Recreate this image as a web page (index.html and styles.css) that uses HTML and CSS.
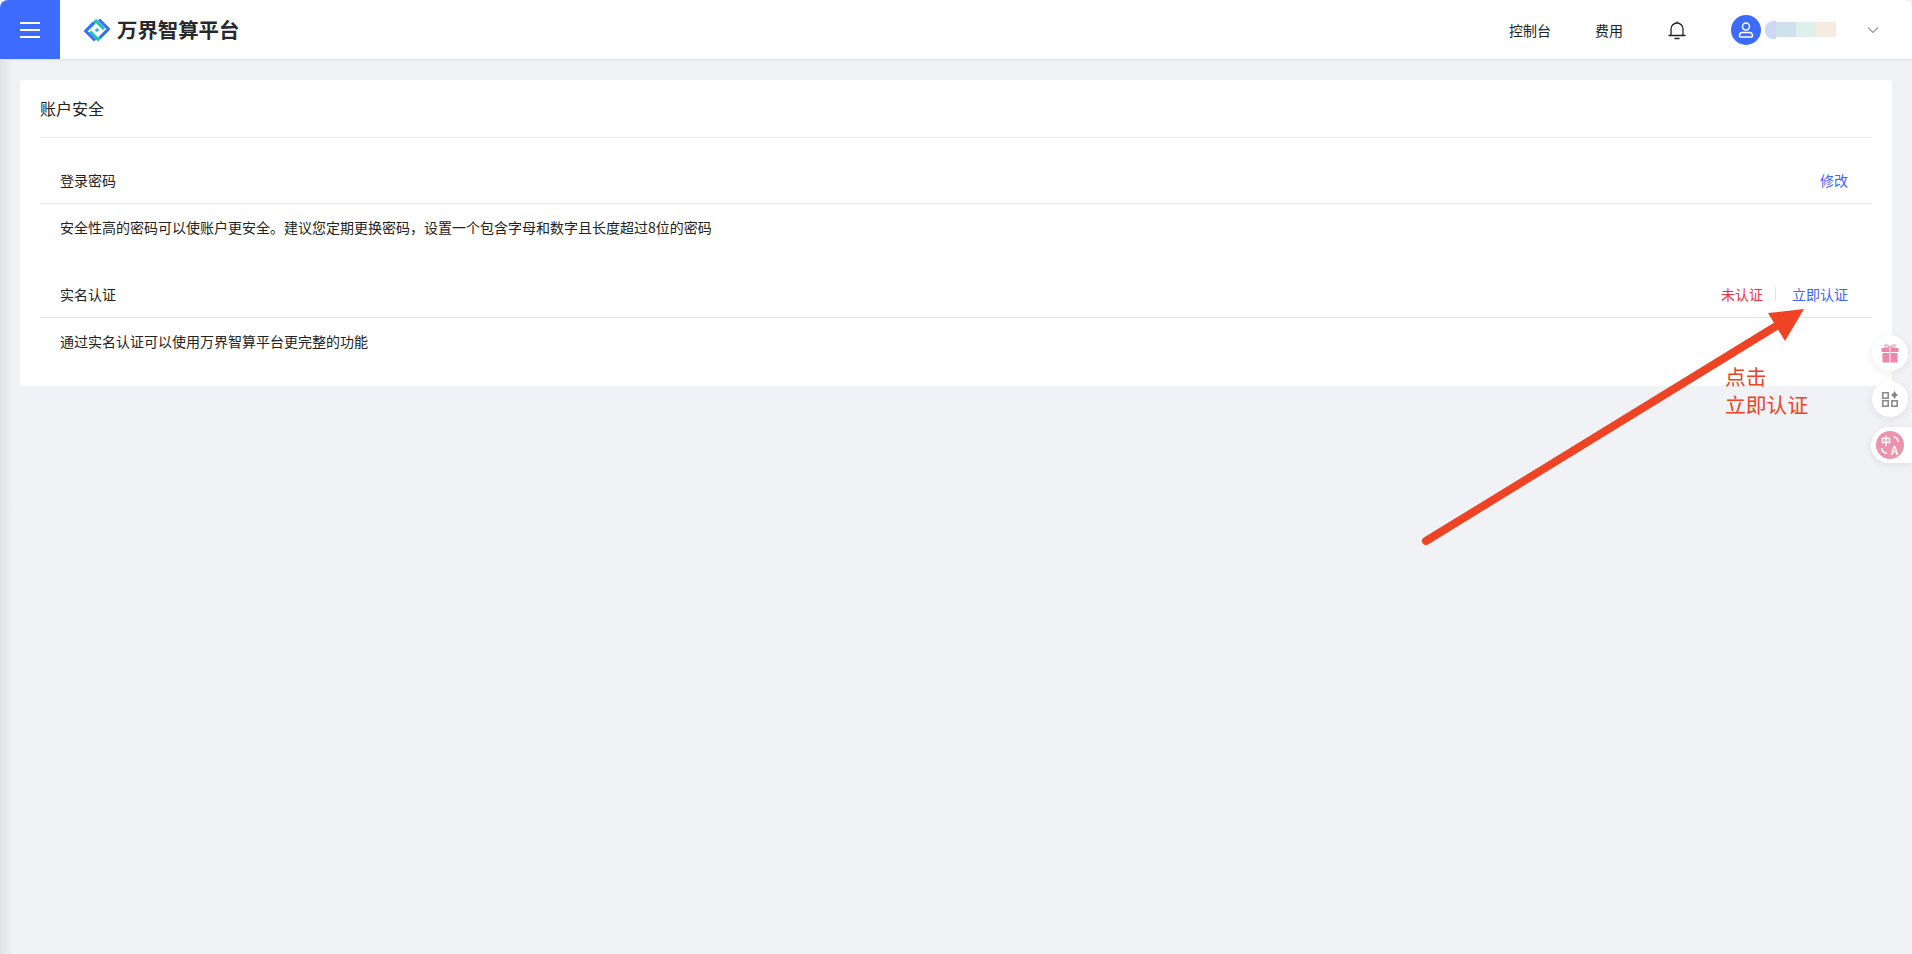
FILE: index.html
```html
<!DOCTYPE html>
<html lang="zh-CN">

<head>
    <meta charset="UTF-8">
    <meta name="viewport" content="width=device-width, initial-scale=1.0">
    <title>账户安全 - 万界智算平台</title>
    <link rel="stylesheet" href="styles.css">
</head>

<body>
    <!-- Top bar -->
    <header class="topbar">
        <button class="menu-btn" aria-label="menu">
            <svg width="20" height="16" viewBox="0 0 20 16"><path d="M0 1h20M0 8h20M0 15h20" stroke="#fff" stroke-width="1.800" fill="none"/></svg>
        </button>
        <div class="brand">
            <svg class="brand-logo" width="26" height="26" viewBox="0 0 26 26" fill="none" stroke-width="3">
                <path d="M2.500 13.500 L12 4 L20 12" stroke="#17c6a6"/>
                <path d="M23.500 13 L14 22.500 L6 14.500" stroke="#17c6a6"/>
                <path d="M15 2.500 L24.500 12 L16 20.500" stroke="#3d6bfd"/>
                <path d="M11 23.500 L1.500 14 L10 5.500" stroke="#3d6bfd"/>
                <circle cx="13" cy="13" r="1.800" fill="#35a7e0" stroke="none"/>
            </svg>
            <span class="brand-name">万界智算平台</span>
        </div>
        <nav class="topnav">
            <a class="nav-link">控制台</a>
            <a class="nav-link">费用</a>
            <svg class="bell" width="20" height="20" viewBox="0 0 20 20" fill="none" stroke="#222" stroke-width="1.300">
                <path d="M1.500 15.500h17M4 15.500V9a6 6 0 0 1 12 0v6.500M10 3V1.500M7.500 18.500h5"/>
            </svg>
            <div class="user">
                <span class="avatar">
                    <svg width="18" height="18" viewBox="0 0 18 18" fill="none" stroke="#fff" stroke-width="1.500">
                        <circle cx="9" cy="5.500" r="3.500"/>
                        <path d="M3.500 16h11a1 1 0 0 0 1-1v-.5a3 3 0 0 0-3-3h-7a3 3 0 0 0-3 3v.5a1 1 0 0 0 1 1z"/>
                    </svg>
                </span>
                <span class="user-name">
                    <i class="blot blot-a"></i><i class="blot blot-b"></i><i class="blot blot-c"></i><i class="blot blot-d"></i>
                </span>
            </div>
            <svg class="chevron" width="14" height="8" viewBox="0 0 14 8" fill="none" stroke="#999" stroke-width="1.200"><path d="M2 1.500l5 5 5-5"/></svg>
        </nav>
    </header>

    <!-- Account security card -->
    <main class="content">
        <section class="card">
            <h2 class="card-title">账户安全</h2>

            <div class="row-head row-first">
                <span>登录密码</span>
                <a class="link">修改</a>
            </div>
            <p class="row-desc">安全性高的密码可以使账户更安全。建议您定期更换密码，设置一个包含字母和数字且长度超过8位的密码</p>

            <div class="row-head">
                <span>实名认证</span>
                <div class="row-actions">
                    <span class="status-no">未认证</span>
                    <i class="sep"></i>
                    <a class="link">立即认证</a>
                </div>
            </div>
            <p class="row-desc">通过实名认证可以使用万界智算平台更完整的功能</p>
        </section>
    </main>

    <!-- Annotation over the screenshot -->
    <svg class="arrow" width="400" height="250" viewBox="0 0 400 250">
        <line x1="6" y1="241" x2="358" y2="25" stroke="#ee4325" stroke-width="8" stroke-linecap="round"/>
        <polygon points="384,9 348,13 365,41" fill="#ee4325"/>
    </svg>
    <div class="note">点击<br>立即认证</div>

    <!-- Floating side buttons -->
    <div class="side-btn side-gift">
        <svg width="18" height="20" viewBox="0 0 18 20">
            <path d="M9 5C7 1 3 1 4 3.500 4.500 5 7 5 9 5zM9 5c2-4 6-4 5-1.500C13.500 5 11 5 9 5z" fill="none" stroke="#f0a0bc" stroke-width="1.200"/>
            <rect x="0.500" y="5" width="17" height="4" fill="#ee86a8"/>
            <rect x="1.500" y="10" width="15" height="9.500" fill="#ee86a8"/>
            <rect x="8" y="5" width="2" height="14.500" fill="#f8c4d4"/>
        </svg>
    </div>
    <div class="side-btn side-apps">
        <svg width="16" height="16" viewBox="0 0 16 16" fill="none" stroke="#858585" stroke-width="1.500">
            <rect x="0.800" y="1.800" width="5.400" height="5.400"/>
            <rect x="0.800" y="9.800" width="5.400" height="5.400"/>
            <rect x="9.800" y="9.800" width="5.400" height="5.400"/>
            <path d="M12.500 0L14 2.500L16 4L14 5.500L12.500 8L11 5.500L9 4L11 2.500z" fill="#858585" stroke="none"/>
        </svg>
    </div>
    <div class="side-lang">
        <span class="lang-icon">
            <svg class="lang-arcs" width="28" height="28" viewBox="0 0 28 28" fill="none" stroke="#fff" stroke-width="1.500">
                <path d="M17 6c3 0 5 2 5 5M6 17c0 3 2 5 5 5"/>
            </svg>
            <span class="lang-zh">中</span><span class="lang-a">A</span>
        </span>
    </div>

    <div class="left-edge"></div>
</body>

</html>
```

FILE: styles.css
```css
* {
    box-sizing: border-box;
}

html,
body {
    margin: 0;
    padding: 0;
    overflow: hidden;
}

body {
    position: relative;
    height: 954px;
    font-family: "Noto Sans CJK SC", "Liberation Sans", sans-serif;
    font-size: 14px;
    color: #222;
    background-color: #f0f2f5;
}

.topbar {
    display: flex;
    align-items: stretch;
    height: 60px;
    background: #fff;
    border-bottom: 1px solid #e3e5e9;
    border-radius: 8px 8px 0 0;
    box-shadow: 0 1px 2px rgba(0, 0, 0, 0.03);
}

.menu-btn {
    display: flex;
    align-items: center;
    justify-content: center;
    width: 60px;
    height: 59px;
    padding: 0;
    border: none;
    border-radius: 8px 0 0 0;
    background: #3d6bfd;
}

.brand {
    display: flex;
    align-items: center;
    margin-left: 24px;
}

.brand-logo {
    display: block;
}

.brand-name {
    margin-left: 7px;
    font-size: 20.400px;
    font-weight: 700;
    color: #26282c;
    line-height: 59px;
}

.topnav {
    display: flex;
    align-items: center;
    margin-left: auto;
    padding-right: 32px;
}

.nav-link {
    margin-right: 44px;
    color: #222;
}

.bell {
    margin-right: 44px;
}

.user {
    display: flex;
    align-items: center;
}

.avatar {
    display: flex;
    align-items: center;
    justify-content: center;
    width: 30px;
    height: 30px;
    border-radius: 50%;
    background: #3d6bfd;
}

.user-name {
    display: flex;
    align-items: center;
    margin-left: 4px;
}

.blot {
    display: block;
    width: 20px;
    height: 15px;
}

.blot-a {
    width: 11px;
    height: 18px;
    border-radius: 8px 0 0 8px;
    background: #cdd8f6;
}

.blot-b {
    background: #cfe1ea;
}

.blot-c {
    background: #dff0ec;
}

.blot-d {
    background: #f6ebe1;
}

.chevron {
    margin-left: 30px;
}

.content {
    padding: 20px;
}

.card {
    padding: 0 20px 20px;
    background: #fff;
    border-radius: 4px;
}

.card-title {
    height: 58px;
    margin: 0;
    font-size: 16px;
    font-weight: 400;
    line-height: 56px;
    color: #222;
    border-bottom: 1px solid #ececee;
}

.row-head {
    display: flex;
    align-items: center;
    justify-content: space-between;
    height: 44px;
    margin-top: 22px;
    padding: 0 24px 3px 20px;
    border-bottom: 1px solid #e6e6e8;
}

.row-desc {
    height: 48px;
    margin: 0;
    padding-left: 20px;
    line-height: 46px;
    color: #222;
}

.row-actions {
    display: flex;
    align-items: center;
}

.link {
    color: #3d64f5;
}

.status-no {
    color: #f5333f;
}

.sep {
    display: block;
    width: 1px;
    height: 14px;
    margin: 0 16px 0 12px;
    background: #e2e2e2;
}

.arrow {
    position: absolute;
    left: 1420px;
    top: 300px;
}

.note {
    position: absolute;
    left: 1725px;
    top: 362px;
    font-size: 20.800px;
    line-height: 28px;
    color: #ee4325;
}

.side-btn {
    position: absolute;
    left: 1872px;
    display: flex;
    align-items: center;
    justify-content: center;
    width: 36px;
    height: 36px;
    border-radius: 50%;
    background: #fff;
    box-shadow: 0 2px 8px rgba(0, 0, 0, 0.08);
}

.side-gift {
    top: 335px;
}

.side-apps {
    top: 381px;
}

.side-lang {
    position: absolute;
    left: 1871px;
    top: 427px;
    display: flex;
    align-items: center;
    width: 41px;
    height: 36px;
    padding-left: 5px;
    border-radius: 18px 0 0 18px;
    background: #fff;
    box-shadow: 0 2px 8px rgba(0, 0, 0, 0.08);
}

.lang-icon {
    position: relative;
    display: block;
    width: 28px;
    height: 28px;
    border-radius: 50%;
    background: #ec94ae;
    color: #fff;
    font-weight: 700;
}

.lang-arcs {
    position: absolute;
    left: 0;
    top: 0;
}

.lang-zh {
    position: absolute;
    left: 5px;
    top: 4px;
    font-size: 10px;
    line-height: 12px;
}

.lang-a {
    position: absolute;
    left: 15px;
    top: 13px;
    font-size: 11px;
    line-height: 13px;
}

.left-edge {
    position: absolute;
    left: 0;
    top: 60px;
    bottom: 0;
    width: 14px;
    background: linear-gradient(to right, #dfe3e8, #f0f2f5);
}
```
